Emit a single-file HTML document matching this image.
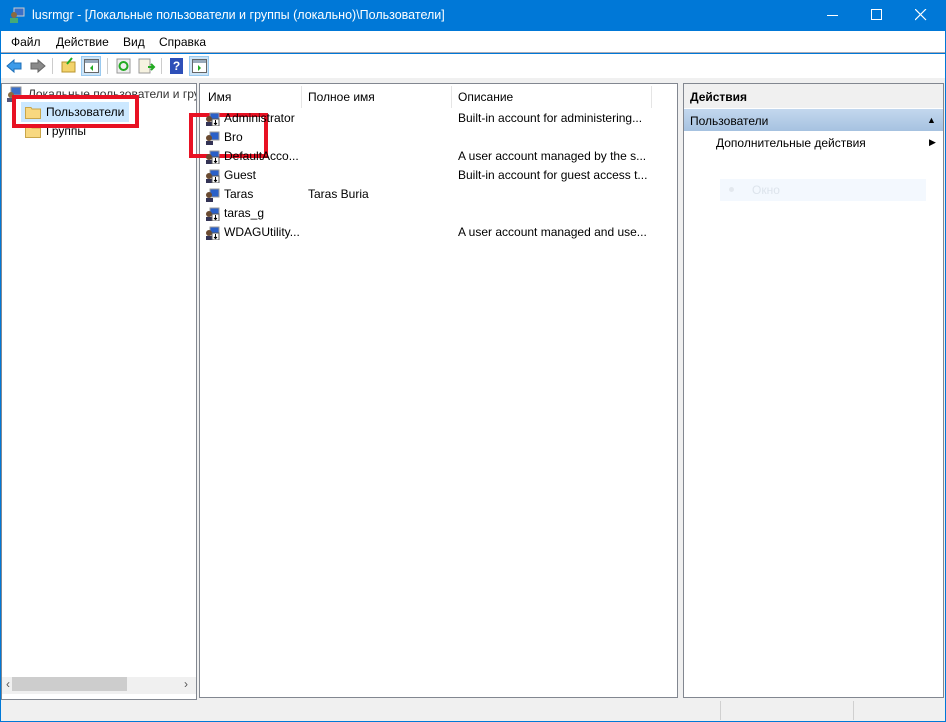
<!DOCTYPE html><html><head><meta charset="utf-8"><style>
*{margin:0;padding:0;box-sizing:border-box}
body{width:946px;height:722px;background:#0078d7;font-family:"Liberation Sans",sans-serif;font-size:12px;position:relative;overflow:hidden;color:#000}
.abs{position:absolute}
.title{left:0;top:0;width:946px;height:31px;background:#0078d7;color:#fff;font-size:12.5px}
.menu{left:1px;top:31px;width:944px;height:22px;background:#fff;border-bottom:1px solid #ababb5}
.menu span{position:absolute;top:4px}
.tb{left:1px;top:54px;width:944px;height:24px;background:#fff}
.gray{left:1px;top:78px;width:944px;height:643px;background:#f0f0f0}
.pane{background:#fff;border:1px solid #828790;overflow:hidden}
.row{position:absolute;height:19px;line-height:19px;white-space:nowrap}
.ico{position:absolute;width:15px;height:14px}
.red{position:absolute;border:4px solid #e81123}
</style></head><body>
<div class="abs title">
<svg class="abs" style="left:9px;top:7px" width="17" height="17"><rect x="5" y="1" width="10" height="8" fill="#3a6fc8" stroke="#ccc"/><circle cx="5" cy="8" r="3" fill="#8a6a40"/><rect x="1" y="11" width="8" height="5" fill="#4a7"/></svg>
<span class="abs" style="left:32px;top:8px">lusrmgr - [Локальные пользователи и группы (локально)\Пользователи]</span>
<div class="abs" style="left:827px;top:15px;width:11px;height:1px;background:#fff"></div>
<div class="abs" style="left:871px;top:9px;width:11px;height:11px;border:1px solid #fff"></div>
<svg class="abs" style="left:915px;top:9px" width="12" height="12"><path d="M0 0L11 11M11 0L0 11" stroke="#fff" stroke-width="1.2"/></svg>
</div>
<div class="abs menu"><span style="left:10px">Файл</span><span style="left:55px">Действие</span><span style="left:122px">Вид</span><span style="left:158px">Справка</span></div>
<div class="abs tb">
<svg class="abs" style="left:4px;top:3px" width="44" height="18"><path d="M2 9L9 3V6H16V12H9V15Z" fill="#3d9be9" stroke="#1d6fb8"/><path d="M40 9L33 3V6H26V12H33V15Z" fill="#8a8a8a" stroke="#666"/></svg>
<div class="abs" style="left:51px;top:4px;width:1px;height:16px;background:#ccc"></div>
<svg class="abs" style="left:60px;top:3px" width="16" height="16"><rect x="1" y="5" width="13" height="10" fill="#f3d36b" stroke="#b8962f"/><path d="M6 7L11 1" stroke="#2a2" stroke-width="2"/></svg>
<div class="abs" style="left:80px;top:2px;width:20px;height:20px;background:#cce4f7;border:1px solid #99c9ef"></div>
<svg class="abs" style="left:83px;top:5px" width="15" height="14"><rect x="0.5" y="0.5" width="14" height="13" fill="#fff" stroke="#666"/><rect x="1" y="1" width="13" height="3" fill="#9ab"/><path d="M9 6L6 9L9 12Z" fill="#2a2"/></svg>
<div class="abs" style="left:106px;top:4px;width:1px;height:16px;background:#ccc"></div>
<svg class="abs" style="left:115px;top:4px" width="16" height="16"><rect x="1" y="1" width="13" height="14" fill="#eee" stroke="#999"/><circle cx="7.5" cy="8" r="4" fill="none" stroke="#2a2" stroke-width="2"/></svg>
<svg class="abs" style="left:137px;top:4px" width="18" height="16"><rect x="1" y="1" width="11" height="14" fill="#f6f2e0" stroke="#999"/><path d="M10 9H16M13 6L16 9L13 12" stroke="#2a2" stroke-width="2" fill="none"/></svg>
<div class="abs" style="left:160px;top:4px;width:1px;height:16px;background:#ccc"></div>
<div class="abs" style="left:169px;top:4px;width:13px;height:16px;background:#2d4fb8;color:#fff;font-weight:bold;text-align:center;line-height:16px">?</div>
<div class="abs" style="left:188px;top:2px;width:20px;height:20px;background:#cce4f7;border:1px solid #99c9ef"></div>
<svg class="abs" style="left:191px;top:5px" width="15" height="14"><rect x="0.5" y="0.5" width="14" height="13" fill="#fff" stroke="#666"/><rect x="1" y="1" width="13" height="3" fill="#9ab"/><path d="M6 6L9 9L6 12Z" fill="#2a2"/></svg>
</div>
<div class="abs gray"></div>
<div class="abs pane" style="left:1px;top:83px;width:196px;height:617px">
<svg class="abs" style="left:4px;top:2px" width="16" height="16"><rect x="5" y="1" width="10" height="8" fill="#3a6fc8" stroke="#999"/><circle cx="5" cy="9" r="3" fill="#8a6a40"/><rect x="1" y="12" width="8" height="4" fill="#557"/></svg>
<div class="row" style="left:26px;top:1px;color:#333">Локальные пользователи и группы</div>
<div class="abs" style="left:19px;top:18px;width:108px;height:20px;background:#cce8ff"></div>
<svg class="abs" style="left:23px;top:21px" width="16" height="14"><path d="M0.5 2.5H6L7 4H15.5V13.5H0.5Z" fill="#f8d880" stroke="#c9a64a"/></svg>
<div class="row" style="left:44px;top:19px">Пользователи</div>
<svg class="abs" style="left:23px;top:40px" width="16" height="14"><path d="M0.5 2.5H6L7 4H15.5V13.5H0.5Z" fill="#f8d880" stroke="#c9a64a"/></svg>
<div class="row" style="left:44px;top:38px">Группы</div>
<div class="abs" style="left:0;top:593px;width:194px;height:17px;background:#f0f0f0"></div>
<div class="abs" style="left:10px;top:593px;width:115px;height:14px;background:#cdcdcd"></div>
<div class="abs" style="left:4px;top:593px;color:#555;font-size:12px">‹</div>
<div class="abs" style="left:182px;top:593px;color:#555;font-size:12px">›</div>
</div>
<div class="red" style="left:12px;top:95px;width:127px;height:33px"></div>
<div class="abs pane" style="left:199px;top:83px;width:479px;height:615px">
<div class="abs" style="left:101px;top:2px;width:1px;height:22px;background:#e5e5e5"></div>
<div class="abs" style="left:251px;top:2px;width:1px;height:22px;background:#e5e5e5"></div>
<div class="abs" style="left:451px;top:2px;width:1px;height:22px;background:#e5e5e5"></div>
<div class="row" style="left:8px;top:4px">Имя</div>
<div class="row" style="left:108px;top:4px">Полное имя</div>
<div class="row" style="left:258px;top:4px">Описание</div>
</div>
<div class="red" style="left:189px;top:113px;width:79px;height:45px"></div>
<div class="abs pane" style="left:683px;top:83px;width:261px;height:615px">
<div class="abs" style="left:0;top:0;width:259px;height:24px;background:#f0f0f0;font-weight:bold"><span class="abs" style="left:6px;top:6px">Действия</span></div>
<div class="abs" style="left:0;top:25px;width:259px;height:22px;background:linear-gradient(#c3d8ee,#a6c2e0)"><span class="abs" style="left:6px;top:5px">Пользователи</span><span class="abs" style="left:243px;top:6px;font-size:9px">▲</span></div>
<div class="row" style="left:32px;top:50px">Дополнительные действия</div>
<span class="abs" style="left:245px;top:53px;font-size:9px">▶</span>
<div class="abs" style="left:36px;top:95px;width:206px;height:22px;background:#f3f8fe"><span class="abs" style="left:9px;top:8px;width:5px;height:5px;border-radius:50%;background:#e3e8ee"></span><span class="abs" style="left:32px;top:4px;color:#dde4ec">Окно</span></div>
</div>
<div class="abs" style="left:720px;top:701px;width:1px;height:19px;background:#d0d0d0"></div>
<div class="abs" style="left:853px;top:701px;width:1px;height:19px;background:#d0d0d0"></div>
<div>
<svg class="abs ico" style="left:205px;top:112px"><rect x="5" y="1" width="9" height="8" fill="#2a60c8" stroke="#999"/><circle cx="4" cy="7" r="3" fill="#6a4a30"/><rect x="1" y="10" width="7" height="4" fill="#335"/><rect x="7" y="7" width="7" height="7" fill="#fff" stroke="#555"/><path d="M10.5 8V12M9 11L10.5 12.5L12 11" stroke="#000"/></svg>
<div class="row" style="left:224px;top:109px">Administrator</div><div class="row" style="left:458px;top:109px">Built-in account for administering...</div>
<svg class="abs ico" style="left:205px;top:131px"><rect x="5" y="1" width="9" height="8" fill="#2a60c8" stroke="#999"/><circle cx="4" cy="7" r="3" fill="#6a4a30"/><rect x="1" y="10" width="7" height="4" fill="#335"/></svg>
<div class="row" style="left:224px;top:128px">Bro</div>
<svg class="abs ico" style="left:205px;top:150px"><rect x="5" y="1" width="9" height="8" fill="#2a60c8" stroke="#999"/><circle cx="4" cy="7" r="3" fill="#6a4a30"/><rect x="1" y="10" width="7" height="4" fill="#335"/><rect x="7" y="7" width="7" height="7" fill="#fff" stroke="#555"/><path d="M10.5 8V12M9 11L10.5 12.5L12 11" stroke="#000"/></svg>
<div class="row" style="left:224px;top:147px">DefaultAcco...</div><div class="row" style="left:458px;top:147px">A user account managed by the s...</div>
<svg class="abs ico" style="left:205px;top:169px"><rect x="5" y="1" width="9" height="8" fill="#2a60c8" stroke="#999"/><circle cx="4" cy="7" r="3" fill="#6a4a30"/><rect x="1" y="10" width="7" height="4" fill="#335"/><rect x="7" y="7" width="7" height="7" fill="#fff" stroke="#555"/><path d="M10.5 8V12M9 11L10.5 12.5L12 11" stroke="#000"/></svg>
<div class="row" style="left:224px;top:166px">Guest</div><div class="row" style="left:458px;top:166px">Built-in account for guest access t...</div>
<svg class="abs ico" style="left:205px;top:188px"><rect x="5" y="1" width="9" height="8" fill="#2a60c8" stroke="#999"/><circle cx="4" cy="7" r="3" fill="#6a4a30"/><rect x="1" y="10" width="7" height="4" fill="#335"/></svg>
<div class="row" style="left:224px;top:185px">Taras</div><div class="row" style="left:308px;top:185px">Taras Buria</div>
<svg class="abs ico" style="left:205px;top:207px"><rect x="5" y="1" width="9" height="8" fill="#2a60c8" stroke="#999"/><circle cx="4" cy="7" r="3" fill="#6a4a30"/><rect x="1" y="10" width="7" height="4" fill="#335"/><rect x="7" y="7" width="7" height="7" fill="#fff" stroke="#555"/><path d="M10.5 8V12M9 11L10.5 12.5L12 11" stroke="#000"/></svg>
<div class="row" style="left:224px;top:204px">taras_g</div>
<svg class="abs ico" style="left:205px;top:226px"><rect x="5" y="1" width="9" height="8" fill="#2a60c8" stroke="#999"/><circle cx="4" cy="7" r="3" fill="#6a4a30"/><rect x="1" y="10" width="7" height="4" fill="#335"/><rect x="7" y="7" width="7" height="7" fill="#fff" stroke="#555"/><path d="M10.5 8V12M9 11L10.5 12.5L12 11" stroke="#000"/></svg>
<div class="row" style="left:224px;top:223px">WDAGUtility...</div><div class="row" style="left:458px;top:223px">A user account managed and use...</div>
</div>
</body></html>
